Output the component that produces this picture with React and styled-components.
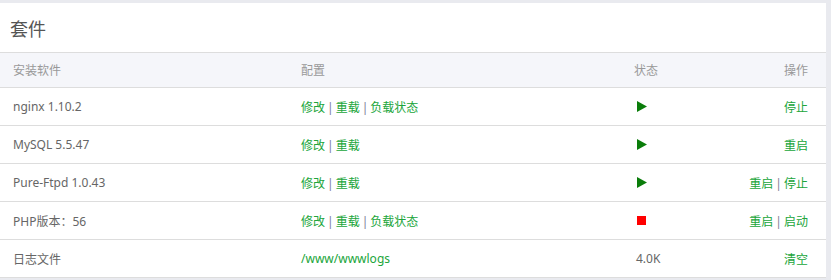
import React from "react";
import styled, { createGlobalStyle } from "styled-components";

const Global = createGlobalStyle`
  html, body { margin: 0; padding: 0; background: #e9eaef; }
  body { font-family: "Noto Sans", "Noto Sans CJK SC", sans-serif; }
`;

const Page = styled.div`
  padding: 3px 5px 0 0;
`;

const Panel = styled.div`
  background: #fff;
`;

const Title = styled.div`
  height: 49px;
  border-bottom: 1px solid #ddd;
  display: flex;
  align-items: center;
  padding-left: 10px;
  font-size: 18px;
  color: #555;
  font-family: "Noto Sans CJK SC", sans-serif;
`;

const Row = styled.div`
  display: grid;
  grid-template-columns: 288px 333px 1fr 160px;
  height: ${(p) => (p.$head ? 34 : 37)}px;
  border-bottom: 1px solid #ddd;
  background: ${(p) => (p.$head ? "#f5f6fa" : "#fff")};
  align-items: center;
  font-size: 12px;
  color: ${(p) => (p.$head ? "#999" : "#666")};
`;

const Cell = styled.div`
  padding-left: ${(p) => (p.$right ? 0 : 13)}px;
  padding-right: ${(p) => (p.$right ? 18 : 0)}px;
  text-align: ${(p) => (p.$right ? "right" : "left")};
  white-space: nowrap;
`;

const StatusCell = styled(Cell)`
  display: flex;
  align-items: center;
  padding-left: 16px;
`;

const SizeCell = styled(Cell)`
  padding-left: 15px;
`;

const Link = styled.a`
  color: #20a53a;
  text-decoration: none;
  cursor: pointer;
`;

const Sep = styled.span`
  color: #7d7d99;
  margin: 0 2px;
`;

const Links = ({ items }) => (
  <>
    {items.map((t, i) => (
      <React.Fragment key={t}>
        {i > 0 && <Sep>|</Sep>}
        <Link>{t}</Link>
      </React.Fragment>
    ))}
  </>
);

const Play = () => (
  <svg width="10" height="11" viewBox="0 0 10 11">
    <polygon points="0,0 10,5.5 0,11" fill="#0a7d0a" />
  </svg>
);

const Stop = () => (
  <svg width="9" height="9" viewBox="0 0 9 9">
    <rect width="9" height="9" fill="#ff0000" />
  </svg>
);

const rows = [
  { name: "nginx 1.10.2", cfg: ["修改", "重载", "负载状态"], run: true, ops: ["停止"] },
  { name: "MySQL 5.5.47", cfg: ["修改", "重载"], run: true, ops: ["重启"] },
  { name: "Pure-Ftpd 1.0.43", cfg: ["修改", "重载"], run: true, ops: ["重启", "停止"] },
  { name: "PHP版本：56", cfg: ["修改", "重载", "负载状态"], run: false, ops: ["重启", "启动"] },
];

export default function App() {
  return (
    <Page>
      <Global />
      <Panel>
        <Title>套件</Title>
        <Row $head>
          <Cell>安装软件</Cell>
          <Cell>配置</Cell>
          <Cell>状态</Cell>
          <Cell $right>操作</Cell>
        </Row>
        {rows.map((r) => (
          <Row key={r.name}>
            <Cell>{r.name}</Cell>
            <Cell>
              <Links items={r.cfg} />
            </Cell>
            <StatusCell>{r.run ? <Play /> : <Stop />}</StatusCell>
            <Cell $right>
              <Links items={r.ops} />
            </Cell>
          </Row>
        ))}
        <Row>
          <Cell>日志文件</Cell>
          <Cell>
            <Link>/www/wwwlogs</Link>
          </Cell>
          <SizeCell>4.0K</SizeCell>
          <Cell $right>
            <Link>清空</Link>
          </Cell>
        </Row>
      </Panel>
    </Page>
  );
}
